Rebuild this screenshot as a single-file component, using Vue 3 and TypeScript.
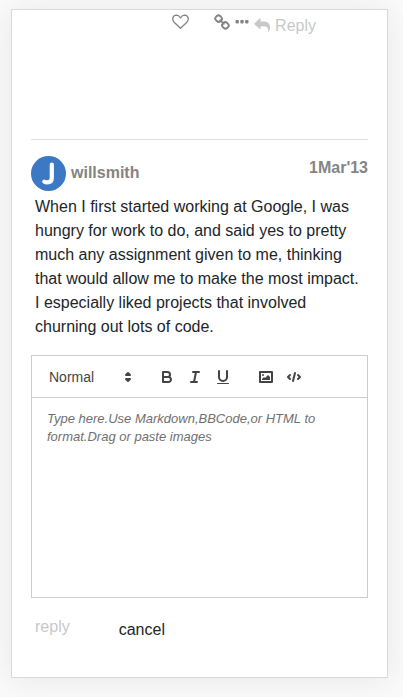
<script setup lang="ts">
import { ref } from 'vue'

interface Post {
  author: string
  date: string
  body: string
}

const post: Post = {
  author: 'willsmith',
  date: "1Mar'13",
  body: 'When I first started working at Google, I was hungry for work to do, and said yes to pretty much any assignment given to me, thinking that would allow me to make the most impact. I especially liked projects that involved churning out lots of code.',
}

const headings: string[] = ['Normal', 'Heading 1', 'Heading 2', 'Heading 3']
const heading = ref<string>('Normal')
const draft = ref<string>('')
</script>

<template>
  <main class="card">
    <div class="actions">
      <button class="icon-btn like" type="button" aria-label="Like">
        <svg width="17" height="16" viewBox="0 0 17 16" fill="none" stroke="currentColor" stroke-width="1.3" stroke-linejoin="round">
          <path d="M8.500 14.200 2.100 8.200C-.3 5.600.6 1.300 4.500 1.200 6.400 1.200 7.600 2.500 8.500 3.800 9.400 2.500 10.600 1.200 12.500 1.200 16.400 1.300 17.300 5.600 14.900 8.200Z" />
        </svg>
      </button>
      <button class="icon-btn" type="button" aria-label="Copy link">
        <svg width="16" height="16" viewBox="0 0 16 16" fill="none" stroke="currentColor" stroke-width="1.900">
          <rect x="1.500" y="1.700" width="6.200" height="5.800" rx="2.300" transform="rotate(45 4.600 4.600)" />
          <rect x="8.300" y="8.500" width="6.200" height="5.800" rx="2.300" transform="rotate(45 11.400 11.400)" />
          <path d="m6.200 6.200 3.600 3.600" stroke-linecap="round" />
        </svg>
      </button>
      <button class="icon-btn" type="button" aria-label="More">
        <svg width="14" height="16" viewBox="0 0 14 16" fill="currentColor">
          <rect x="0.500" y="6" width="3.400" height="3.400" rx="0.800" />
          <rect x="5.300" y="6" width="3.400" height="3.400" rx="0.800" />
          <rect x="10.100" y="6" width="3.400" height="3.400" rx="0.800" />
        </svg>
      </button>
      <button class="reply-link" type="button">
        <svg width="16" height="16" viewBox="0 0 16 16" fill="currentColor">
          <path d="M16 10.400c0 1.500-.5 2.800-1.200 4.300-.2.4-.7.4-.7-.1.3-3.700-.7-5.300-5.300-5.300H6.600v2.400c0 .6-.5.7-.9.4L.3 7.300a.6.6 0 0 1 0-.8l5.400-4.900c.4-.3.9-.1.9.4v2.500h2C13.700 4.500 16 6.200 16 10.400Z" />
        </svg>
        <span>Reply</span>
      </button>
    </div>

    <article class="post">
      <header class="post-head">
        <svg class="avatar" width="35" height="35" viewBox="0 0 35 35" role="img" aria-label="Avatar">
          <circle cx="17.500" cy="17.500" r="17.500" fill="#3c78c3" />
          <path d="M20.800 8.500v13.300c0 3.400-2 4.600-4.400 4.600-1.300 0-2.400-.3-3.100-.8" fill="none" stroke="#fff" stroke-width="4.200" stroke-linecap="round" stroke-linejoin="round" />
        </svg>
        <strong class="author">{{ post.author }}</strong>
        <time class="date" datetime="2013-03-01">{{ post.date }}</time>
      </header>
      <p class="body">{{ post.body }}</p>
    </article>

    <form class="composer" @submit.prevent>
      <div class="editor">
        <div class="toolbar">
          <div class="picker">
            <select v-model="heading" aria-label="Text style">
              <option v-for="item in headings" :key="item" :value="item">{{ item }}</option>
            </select>
            <svg width="18" height="18" viewBox="0 0 18 18" class="glyph filled">
              <polygon points="7 11 9 13 11 11 7 11" />
              <polygon points="7 7 9 5 11 7 7 7" />
            </svg>
          </div>
          <div class="group">
            <button type="button" aria-label="Bold">
              <svg viewBox="0 0 18 18" class="glyph">
                <path d="M5,4H9.500A2.500,2.500,0,0,1,12,6.500v0A2.500,2.500,0,0,1,9.500,9H5A0,0,0,0,1,5,9V4A0,0,0,0,1,5,4Z" />
                <path d="M5,9h5.500A2.500,2.500,0,0,1,13,11.500v0A2.500,2.500,0,0,1,10.500,14H5a0,0,0,0,1,0,0V9A0,0,0,0,1,5,9Z" />
              </svg>
            </button>
            <button type="button" aria-label="Italic">
              <svg viewBox="0 0 18 18" class="glyph">
                <path d="M7 4h6M5 14h6M8 14l2-10" />
              </svg>
            </button>
            <button type="button" aria-label="Underline">
              <svg viewBox="0 0 18 18" class="glyph">
                <path d="M5,3V9a4.012,4.012,0,0,0,4,4H9a4.012,4.012,0,0,0,4-4V3" />
                <rect class="solid" height="1" rx="0.500" ry="0.500" width="12" x="3" y="15" />
              </svg>
            </button>
          </div>
          <div class="group">
            <button type="button" aria-label="Insert image">
              <svg viewBox="0 0 18 18" class="glyph">
                <rect height="10" width="12" x="3" y="4" />
                <circle class="solid" cx="6" cy="7" r="1" />
                <polyline class="solid" points="5 12 5 11 7 9 8 10 11 7 13 9 13 12 5 12" />
              </svg>
            </button>
            <button type="button" aria-label="Insert code">
              <svg viewBox="0 0 18 18" class="glyph">
                <path d="M5 7 3 9l2 2M13 7l2 2-2 2M10 5 8 13" />
              </svg>
            </button>
          </div>
        </div>
        <textarea
          v-model="draft"
          aria-label="Reply text"
          placeholder="Type here.Use Markdown,BBCode,or HTML to format.Drag or paste images"
        ></textarea>
      </div>
      <div class="form-actions">
        <button class="submit" type="submit">reply</button>
        <button class="cancel" type="button">cancel</button>
      </div>
    </form>
  </main>
</template>

<style>
body {
  background: #fafafa;
}
</style>

<style scoped>
.card,
.card * {
  box-sizing: border-box;
}

.card {
  margin: 9px 15px 19px 11px;
  padding: 0 19px 35px;
  background: #fff;
  border: 1px solid #d9d9d9;
  box-shadow: 0 2px 30px rgba(0, 0, 0, 0.08);
  color: #212529;
  font-family: "Liberation Sans", Arial, sans-serif;
  font-size: 16px;
  line-height: 24px;
}

button {
  padding: 0;
  border: 0;
  background: none;
  color: inherit;
  font: inherit;
  cursor: pointer;
}

svg {
  display: block;
}

.actions {
  display: flex;
  justify-content: flex-end;
  align-items: flex-start;
  gap: 5px;
  height: 129px;
  padding: 4px 52px 0 0;
}

.icon-btn {
  color: #848484;
}

.like {
  margin-right: 20px;
}

.reply-link {
  display: flex;
  gap: 5px;
  color: #c8c8c8;
}

.reply-link svg {
  margin-top: 3px;
}

.post {
  border-top: 1px solid #dfdfdf;
  padding-top: 16px;
}

.post-head {
  display: flex;
  align-items: flex-start;
  gap: 5px;
  color: #848484;
  font-weight: bold;
}

.author {
  padding-top: 5px;
}

.date {
  margin-left: auto;
}

.body {
  margin: 4px 0 16px;
  padding: 0 4px;
}

.editor {
  border: 1px solid #ccc;
}

.toolbar {
  display: flex;
  gap: 15px;
  padding: 9px 8px 8px;
  border-bottom: 1px solid #ccc;
}

.picker {
  position: relative;
  width: 98px;
  height: 24px;
}

.picker select {
  width: 100%;
  height: 24px;
  padding: 0 9px;
  border: 0;
  background: none;
  appearance: none;
  color: #444;
  font: 500 14px/24px "Liberation Sans", Arial, sans-serif;
}

.picker svg {
  position: absolute;
  top: 3px;
  right: 1px;
  pointer-events: none;
}

.group {
  display: flex;
}

.group button {
  width: 28px;
  height: 24px;
  padding: 3px 5px;
}

.glyph {
  fill: none;
  stroke: #444;
  stroke-width: 2;
  stroke-linecap: round;
  stroke-linejoin: round;
}

.group .glyph {
  width: 18px;
  height: 18px;
}

.glyph.filled {
  fill: #444;
}

.glyph .solid {
  fill: #444;
  stroke: none;
}

textarea {
  display: block;
  width: 100%;
  height: 199px;
  padding: 12px 15px;
  border: 0;
  outline: 0;
  resize: none;
  background: none;
  color: #212529;
  font: 13px/18px "Liberation Sans", Arial, sans-serif;
}

textarea::placeholder {
  color: #707070;
  font-style: italic;
}

.form-actions {
  display: flex;
  align-items: flex-start;
  gap: 49px;
  padding: 17px 4px 0;
}

.submit {
  color: #c8c8c8;
}

.cancel {
  margin-top: 3px;
}
</style>
